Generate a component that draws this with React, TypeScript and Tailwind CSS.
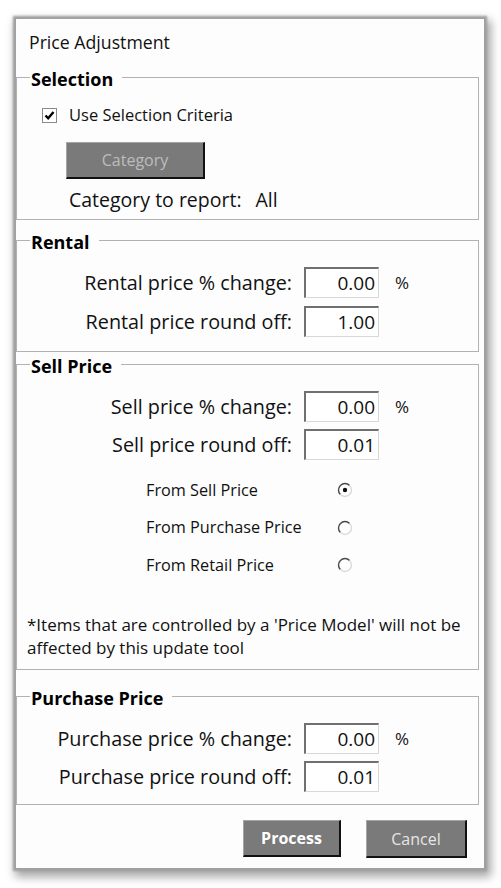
import React from 'react';

const FONT = "font-['Open_Sans','Noto_Sans',sans-serif]";

function Group({ title, children, className = '' }: { title: string; children: React.ReactNode; className?: string }) {
  return (
    <fieldset className={`w-[463px] border border-[#b2b2b2] ${className}`}>
      <legend className="ml-[13px] pl-[1px] pr-[9px] pt-[4px] text-[18px] font-bold leading-[20px] text-black">{title}</legend>
      {children}
    </fieldset>
  );
}

function NumBox({ value }: { value: string }) {
  return (
    <div className="h-[31px] w-[75px] border-t-2 border-l-2 border-b border-r border-t-[#707070] border-l-[#707070] border-b-[#d8d8d8] border-r-[#d8d8d8] bg-white pr-[3px] text-right text-[19px] leading-[28px] text-[#111]">
      {value}
    </div>
  );
}

function FieldRow({ label, value, pct }: { label: string; value: string; pct?: boolean }) {
  return (
    <div className="flex h-[31px] items-center">
      <div className="w-[275px] whitespace-nowrap text-right text-[19.8px] text-[#111]">{label}</div>
      <div className="ml-[12px]">
        <NumBox value={value} />
      </div>
      {pct && <span className="ml-[16px] text-[17px] text-[#111]">%</span>}
    </div>
  );
}

function Radio({ checked }: { checked?: boolean }) {
  return (
    <svg width="16" height="16" viewBox="0 0 16 16">
      <circle cx="8" cy="8" r="6.5" fill="#fff" />
      <path d="M3.4 12.6 A6.5 6.5 0 0 1 12.6 3.4" fill="none" stroke="#4a4a4a" strokeWidth="1.4" />
      <path d="M12.6 3.4 A6.5 6.5 0 0 1 3.4 12.6" fill="none" stroke="#dadada" strokeWidth="1.4" />
      {checked && <circle cx="8" cy="8" r="2.2" fill="#111" />}
    </svg>
  );
}

function RadioRow({ label, checked }: { label: string; checked?: boolean }) {
  return (
    <div className="flex h-[20px] items-center pl-[129px]">
      <span className="w-[191px] whitespace-nowrap text-[16.25px] text-[#111]">{label}</span>
      <Radio checked={checked} />
    </div>
  );
}

function WinButton({ label, bold, light, className = '' }: { label: string; bold?: boolean; light?: string; className?: string }) {
  return (
    <button
      className={`flex items-center justify-center border-t border-l border-b-2 border-r-2 border-t-[#a5a5a5] border-l-[#a5a5a5] border-b-[#111] border-r-[#111] bg-[#7a7a7a] text-[16px] ${bold ? 'font-bold' : ''} ${light ?? 'text-white'} ${className}`}
    >
      {label}
    </button>
  );
}

export default function App() {
  return (
    <div className={`min-h-[888px] w-[501px] bg-white pl-[16px] pt-[19px] ${FONT}`}>
      <div className="h-[849px] w-[468px] bg-[#fdfdfd] shadow-[0_0_2px_3px_#a0a0a0,3px_5px_9px_4px_rgba(0,0,0,0.35)]">
        <div className="pl-[13px] pt-[12px] text-[17.7px] leading-[22px] text-[#111]">Price Adjustment</div>

        <Group title="Selection" className="mt-[12px] pb-[8px]">
          <div className="mt-[16px] flex h-[20px] items-center pl-[25px]">
            <div className="flex h-[15px] w-[15px] items-center justify-center border border-[#8a8a8a] bg-white">
              <svg width="11" height="11" viewBox="0 0 11 11">
                <path d="M1.5 5.5 L4.2 8.3 L9.5 2" fill="none" stroke="#000" strokeWidth="2.4" />
              </svg>
            </div>
            <span className="ml-[12px] whitespace-nowrap text-[16.5px] text-[#111]">Use Selection Criteria</span>
          </div>
          <WinButton label="Category" light="text-[#bdbdbd]" className="ml-[49px] mt-[17px] h-[37px] w-[139px]" />
          <div className="mt-[10px] flex whitespace-nowrap pl-[52px] text-[19.5px] leading-[22px] text-[#111]">
            <span>Category to report:</span>
            <span className="ml-[14px]">All</span>
          </div>
        </Group>

        <Group title="Rental" className="mt-[8px] pb-[14px]">
          <div className="mt-[15px] flex flex-col gap-[8px]">
            <FieldRow label="Rental price % change:" value="0.00" pct />
            <FieldRow label="Rental price round off:" value="1.00" />
          </div>
        </Group>

        <Group title="Sell Price" className="mt-0 pb-[10px]">
          <div className="mt-[15px] flex flex-col gap-[7px]">
            <FieldRow label="Sell price % change:" value="0.00" pct />
            <FieldRow label="Sell price round off:" value="0.01" />
          </div>
          <div className="mt-[20px] flex flex-col gap-[17.5px]">
            <RadioRow label="From Sell Price" checked />
            <RadioRow label="From Purchase Price" />
            <RadioRow label="From Retail Price" />
          </div>
          <p className="mt-[38px] pl-[10px] pr-[4px] text-[17px] leading-[23px] text-[#111]">
            *Items that are controlled by a 'Price Model' will not be affected by this update tool
          </p>
        </Group>

        <Group title="Purchase Price" className="mt-[14px] pb-[12px]">
          <div className="mt-[15px] flex flex-col gap-[7px]">
            <FieldRow label="Purchase price % change:" value="0.00" pct />
            <FieldRow label="Purchase price round off:" value="0.01" />
          </div>
        </Group>

        <div className="mt-[15px] flex justify-end gap-[25px] pr-[17px]">
          <WinButton label="Process" bold className="h-[37px] w-[98px]" />
          <WinButton label="Cancel" light="text-[#e6e6e6]" className="h-[38px] w-[101px]" />
        </div>
      </div>
    </div>
  );
}
